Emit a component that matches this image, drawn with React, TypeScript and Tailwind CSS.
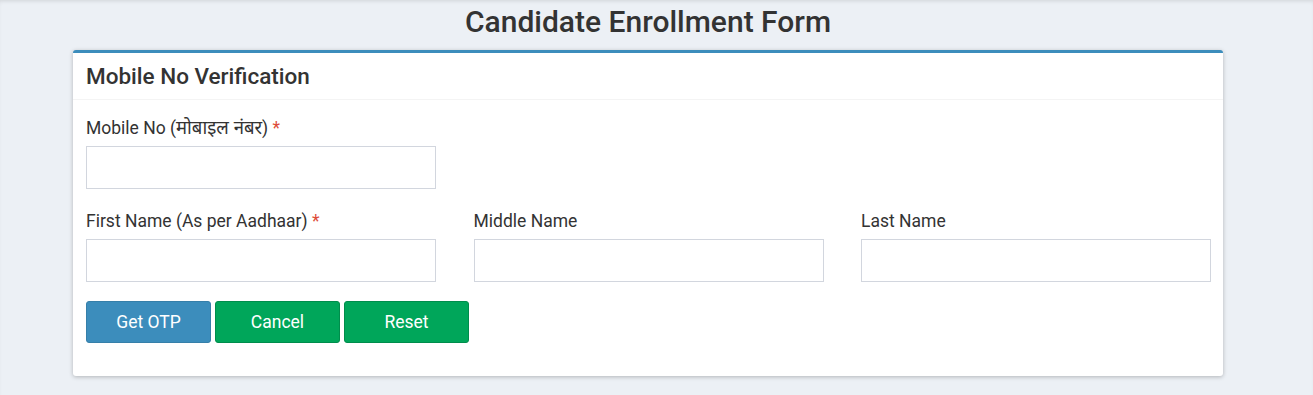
export default function App() {
  const inputCls =
    "block w-[350px] h-[43px] border border-[#d2d6de] bg-white px-3 text-[16px] text-[#555] outline-none";
  const labelCls = "mb-[6px] block text-[17.5px] font-normal text-[#333] leading-[24px]";
  const Star = () => <span className="text-[#dd4b39]"> *</span>;

  return (
    <div
      className="min-h-[395px] bg-[#ecf0f5] shadow-[inset_0_3px_4px_-2px_rgba(0,0,0,0.12)]"
      style={{ fontFamily: "Roboto, 'Noto Sans', sans-serif" }}
    >
      <h1 className="mx-[73px] w-[1150px] pt-[2px] text-center text-[30px] font-medium leading-[40px] text-[#333]">
        Candidate Enrollment Form
      </h1>
      <div className="mx-[73px] mt-[8px] w-[1150px] rounded-[3px] border-t-[3px] border-[#3c8dbc] bg-white shadow-[0_1px_4px_rgba(0,0,0,0.25)]">
        <div className="border-b border-[#f4f4f4] px-[13px] py-[8px]">
          <h3 className="text-[22.5px] font-medium leading-[30px] text-[#333]">Mobile No Verification</h3>
        </div>
        <div className="pl-[13px] pr-[12px] pt-[15px] pb-[33px]">
          <div>
            <label className={labelCls}>
              Mobile No (<span className="text-[18.5px]" style={{ fontFamily: "'Noto Sans', sans-serif" }}>मोबाइल नंबर</span>)
              <Star />
            </label>
            <input className={inputCls} type="text" />
          </div>
          <div className="mt-[20px] grid grid-cols-3 gap-x-[37.5px]">
            <div>
              <label className={labelCls}>
                First Name (As per Aadhaar)
                <Star />
              </label>
              <input className={inputCls} type="text" />
            </div>
            <div>
              <label className={labelCls}>Middle Name</label>
              <input className={inputCls} type="text" />
            </div>
            <div>
              <label className={labelCls}>Last Name</label>
              <input className={inputCls} type="text" />
            </div>
          </div>
          <div className="mt-[19px] flex gap-[4px]">
            <button className="h-[42px] w-[125px] rounded-[3px] border border-[#367fa9] bg-[#3c8dbc] text-[17.5px] text-white">
              Get OTP
            </button>
            <button className="h-[42px] w-[125px] rounded-[3px] border border-[#008d4c] bg-[#00a65a] text-[17.5px] text-white">
              Cancel
            </button>
            <button className="h-[42px] w-[125px] rounded-[3px] border border-[#008d4c] bg-[#00a65a] text-[17.5px] text-white">
              Reset
            </button>
          </div>
        </div>
      </div>
    </div>
  );
}
